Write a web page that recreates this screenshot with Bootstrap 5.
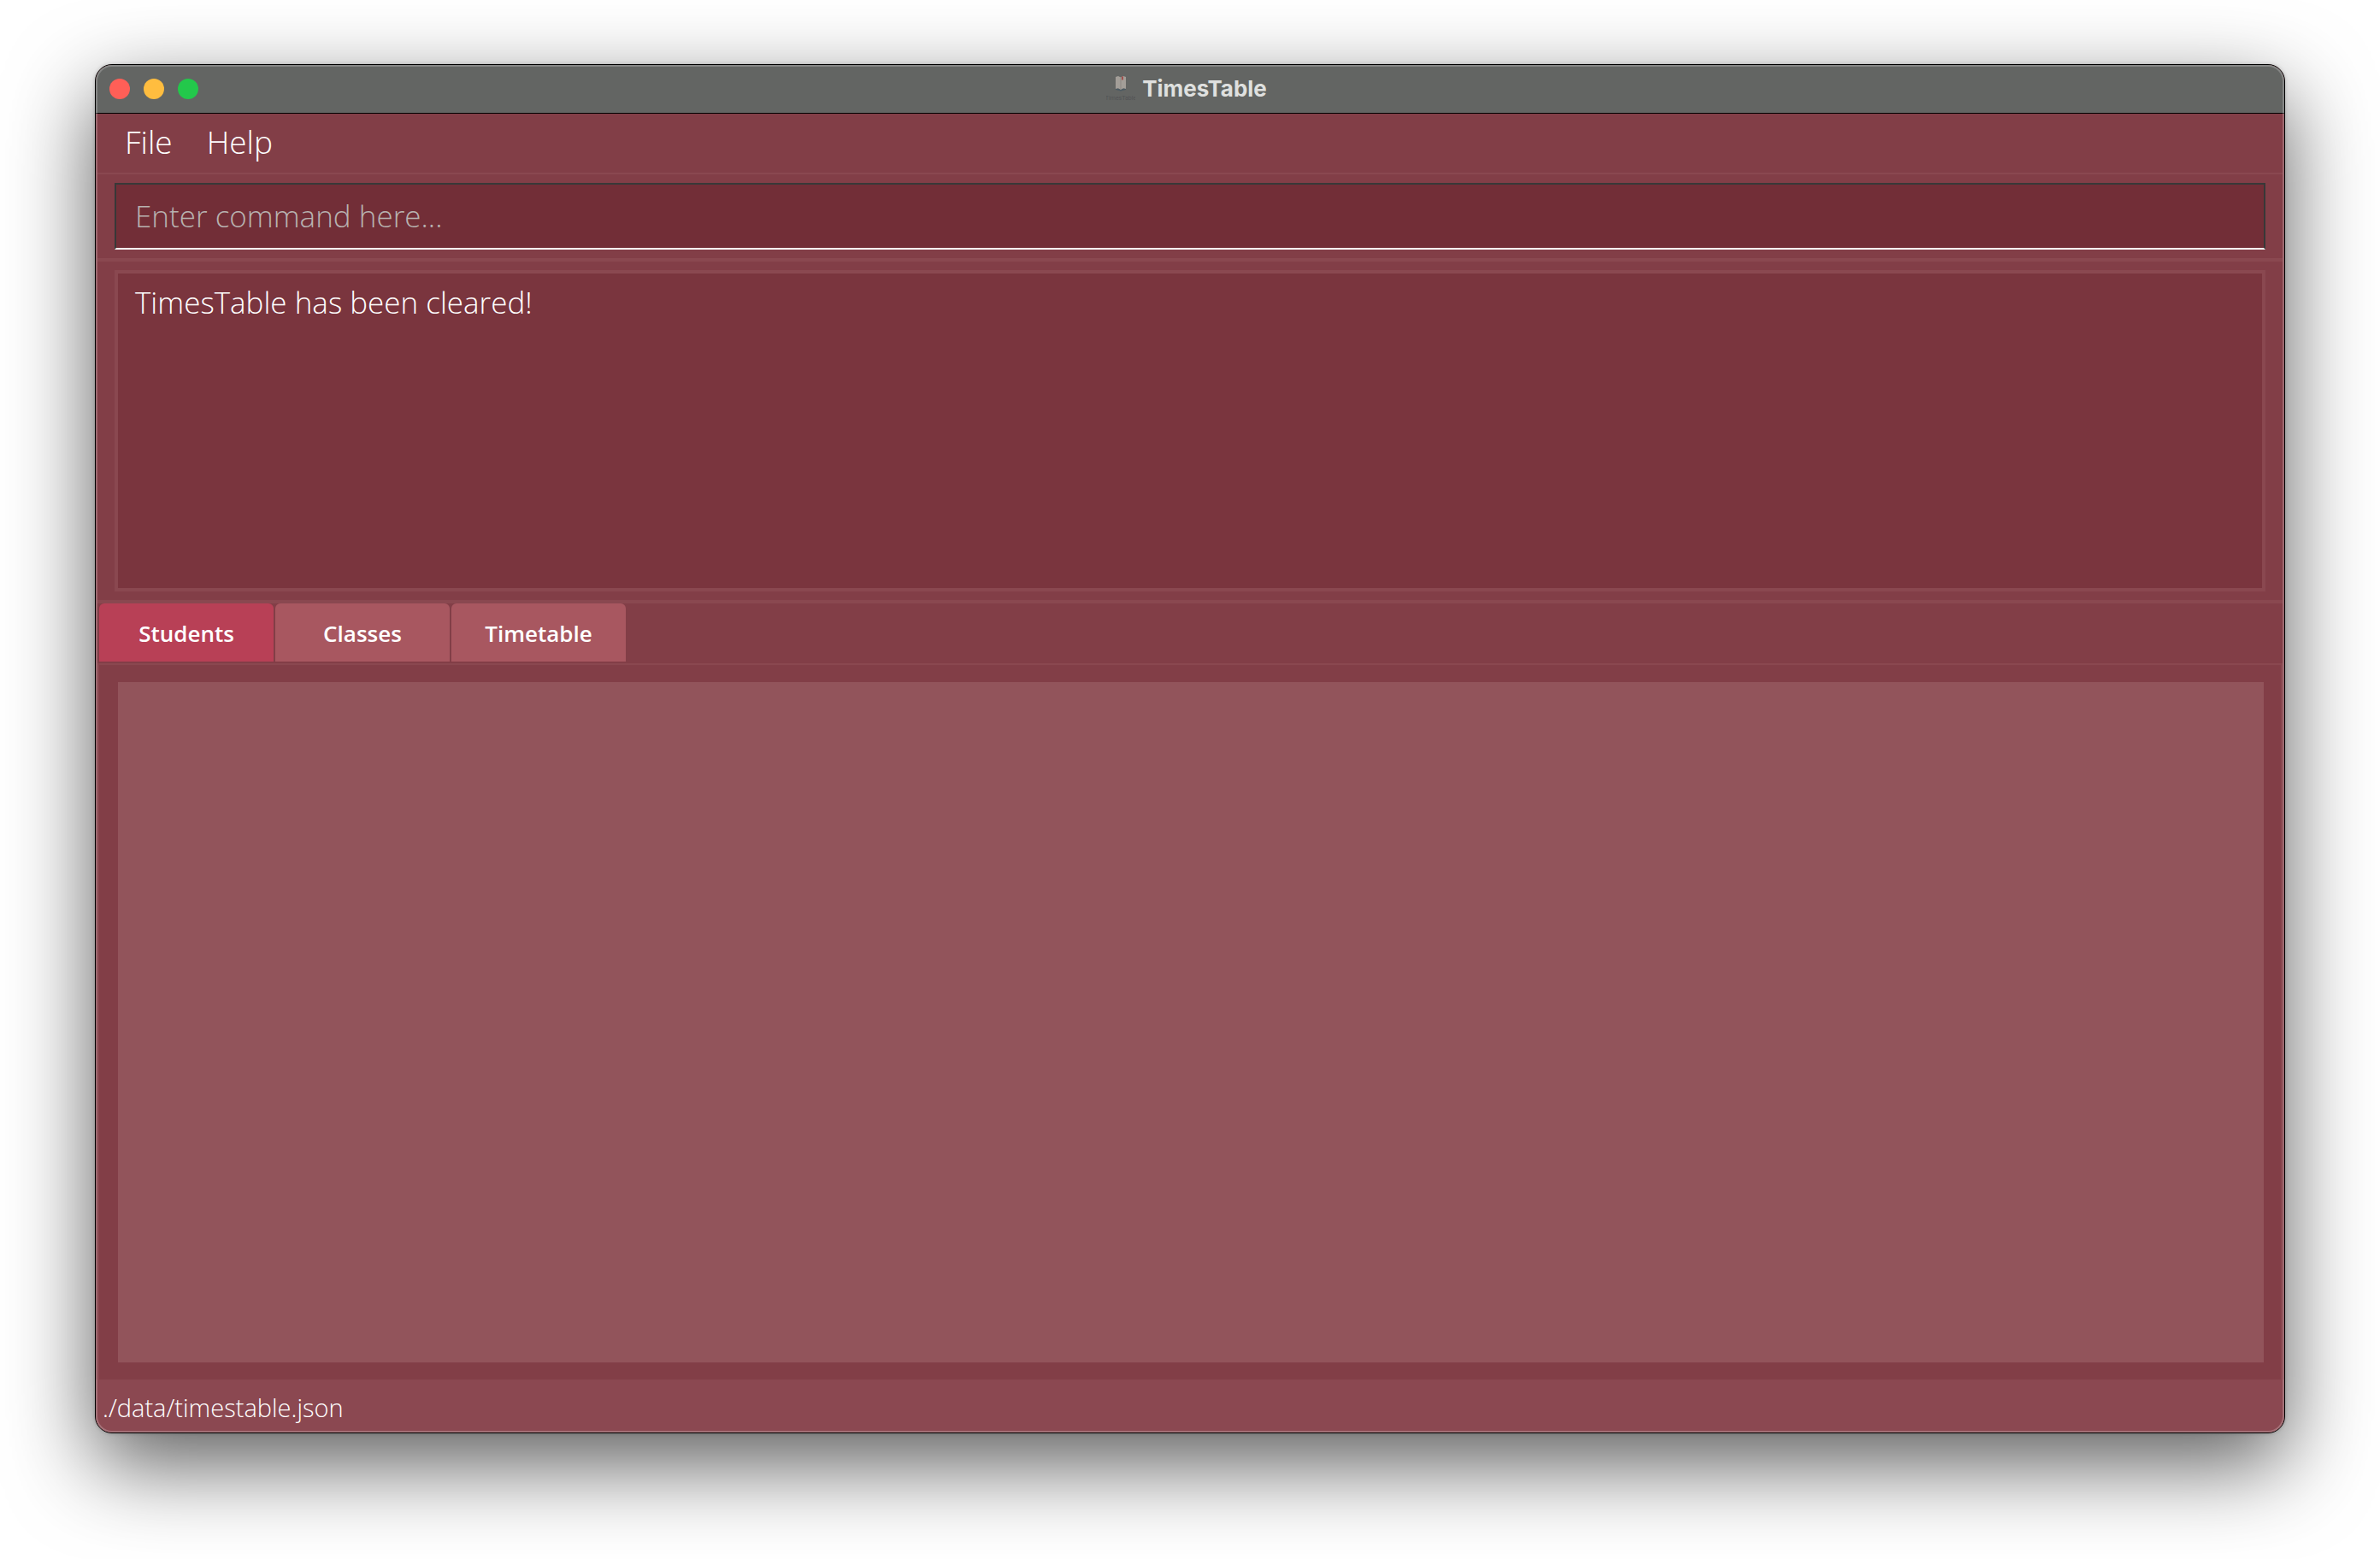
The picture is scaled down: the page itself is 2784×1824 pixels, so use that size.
<!DOCTYPE html>
<html lang="en">
<head>
<meta charset="utf-8">
<meta name="viewport" content="width=device-width, initial-scale=1">
<title>TimesTable</title>
<link href="https://cdn.jsdelivr.net/npm/bootstrap@5.3.0/dist/css/bootstrap.min.css" rel="stylesheet">
<style>
body { background: #fff; font-family: "Open Sans", sans-serif; }
.desktop { padding: 75px 111px 147px; overflow: hidden; }
.app-window { background: #823e47; border: 1px solid #000; border-radius: 20px; box-shadow: 0 36px 100px rgba(0,0,0,.64), 0 0 4px rgba(0,0,0,.2); }
.app-window::after { content: ""; position: absolute; inset: 0; border-radius: 19px; box-shadow: inset 0 0 0 2px rgba(255,255,255,.22); pointer-events: none; }
.title-bar { height: 57px; background: #636563; border-bottom: 1px solid #000; border-radius: 19px 19px 0 0; padding: 0 24px 0 16px; }
.lights { gap: 16px; width: 104px; }
.light { width: 24px; height: 24px; border: 0; border-radius: 50%; padding: 0; }
.light-close { background: #ff5f57; }
.light-min { background: #ffbd3f; }
.light-zoom { background: #23c84b; }
.title-text { font: 700 26px/32px Inter, sans-serif; color: #dfe0df; }
.app-icon text { font: 7px Roboto, sans-serif; fill: #525355; }
.menu-row { height: 71px; border-bottom: 2px solid #8a4850; padding: 0 12px 4px; margin: 0 2px; }
.menu-btn { background: none; border: 0; padding: 0 20px; font-size: 37px; line-height: 52px; font-weight: 300; color: #fff; }
.cmd-pane { padding: 10px 20px; border-bottom: 4px solid #8a4850; margin: 0 2px; }
.cmd-box { height: 78px; border: 2px solid #383838; border-bottom-color: #fff; border-radius: 0; background: #722e37; padding: 0 22px 2px; font-size: 35px; font-weight: 300; color: #fff; }
.cmd-box:focus { background: #722e37; border-color: #383838; border-bottom-color: #fff; box-shadow: none; color: #fff; }
.cmd-box::placeholder { color: #b8b2b0; opacity: 1; }
.result-pane { padding: 10px 20px; border-bottom: 4px solid #8a4850; margin: 0 2px; }
.result-box { height: 376px; border: 4px solid #8a4850; border-radius: 0; background: #7a353e; padding: 10px 20px; font-size: 35px; line-height: 48px; font-weight: 300; color: #fff; resize: none; }
.result-box:focus { background: #7a353e; border-color: #8a4850; box-shadow: none; color: #fff; }
.tab-strip { gap: 2px; padding: 0 4px 2px; }
.tab-btn { width: 204px; height: 68px; border: 0; border-radius: 6px 6px 0 0; background: #a85760; color: #fff; font-size: 26px; font-weight: 600; padding: 2px 0 0; }
.tab-btn.active { background: #b84056; }
.tab-pane-box { border: 2px solid #8a4850; border-bottom: 0; margin: 0 2px; padding: 20px 20px 20px 22px; }
.person-list { background: #92545b; min-height: 796px; }
.status-row { height: 62px; background: #8b4851; border-radius: 0 0 19px 19px; padding: 4px 8px 0; font-size: 29px; font-weight: 300; color: #fff; }
</style>
<script src="https://cdn.jsdelivr.net/npm/bootstrap@5.3.0/dist/js/bootstrap.bundle.min.js"></script>
</head>
<body>
<div class="desktop">
  <main class="app-window position-relative">
    <header class="title-bar d-flex align-items-center justify-content-between">
      <div class="lights d-flex">
        <button class="light light-close" aria-label="Close"></button>
        <button class="light light-min" aria-label="Minimize"></button>
        <button class="light light-zoom" aria-label="Zoom"></button>
      </div>
      <div class="d-flex align-items-center gap-2">
        <svg class="app-icon" width="34" height="32" viewBox="0 0 34 32" aria-hidden="true">
          <path d="M11 2 14 1 17 2.500 20 1 23 2V16L20 15.500 17 17 14 15.500 11 16Z" fill="#a39e98"/>
          <path d="M11 16 14 15.500 17 17 20 15.500 23 16V17L17 18.500 11 17Z" fill="#4c5a62"/>
          <path d="M17 2.500V17" stroke="#8d8984"/>
          <path d="M18 1.500H20V6L19 5 18 6Z" fill="#a0514e"/>
          <text x="17" y="29" text-anchor="middle">TimesTable</text>
        </svg>
        <span class="title-text">TimesTable</span>
      </div>
      <div class="lights"></div>
    </header>
    <nav class="menu-row d-flex align-items-center">
      <button class="menu-btn">File</button>
      <button class="menu-btn">Help</button>
    </nav>
    <div class="cmd-pane">
      <input class="form-control cmd-box" type="text" placeholder="Enter command here..." aria-label="Command">
    </div>
    <div class="result-pane">
      <textarea class="form-control result-box" readonly aria-label="Result">TimesTable has been cleared!</textarea>
    </div>
    <div class="tab-strip d-flex" role="tablist">
      <button class="tab-btn active" role="tab" aria-selected="true">Students</button>
      <button class="tab-btn" role="tab" aria-selected="false">Classes</button>
      <button class="tab-btn" role="tab" aria-selected="false">Timetable</button>
    </div>
    <section class="tab-pane-box"><div class="person-list"></div></section>
    <footer class="status-row d-flex align-items-center">./data/timestable.json</footer>
  </main>
</div>
</body>
</html>
